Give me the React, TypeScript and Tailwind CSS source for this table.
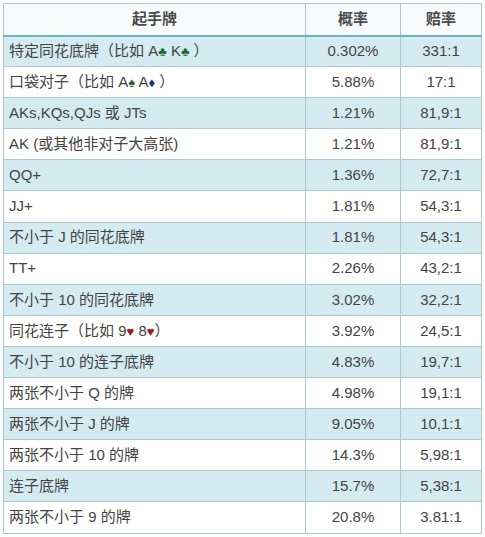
const font = { fontFamily: '"Liberation Sans", "Noto Sans CJK SC", sans-serif' };

const Club = () => <span className="text-[#1f6b2c] text-[13px]">♣</span>;
const Spade = () => <span className="text-[#2c5a3a] text-[13px]">♠</span>;
const Diamond = () => <span className="text-[#1d2f7a] text-[13px]">♦</span>;
const Heart = () => <span className="text-[#a3161d] text-[13px]">♥</span>;

type Row = { hand: React.ReactNode; prob: string; odds: string };

const rows: Row[] = [
  {
    hand: (
      <>
        特定同花底牌（比如 A<Club /> K<Club /> ）
      </>
    ),
    prob: "0.302%",
    odds: "331:1",
  },
  {
    hand: (
      <>
        口袋对子（比如 A<Spade /> A<Diamond /> ）
      </>
    ),
    prob: "5.88%",
    odds: "17:1",
  },
  { hand: "AKs,KQs,QJs 或  JTs", prob: "1.21%", odds: "81,9:1" },
  { hand: "AK (或其他非对子大高张)", prob: "1.21%", odds: "81,9:1" },
  { hand: "QQ+", prob: "1.36%", odds: "72,7:1" },
  { hand: "JJ+", prob: "1.81%", odds: "54,3:1" },
  { hand: "不小于 J 的同花底牌", prob: "1.81%", odds: "54,3:1" },
  { hand: "TT+", prob: "2.26%", odds: "43,2:1" },
  { hand: "不小于 10 的同花底牌", prob: "3.02%", odds: "32,2:1" },
  {
    hand: (
      <>
        同花连子（比如 9<Heart /> 8<Heart />）
      </>
    ),
    prob: "3.92%",
    odds: "24,5:1",
  },
  { hand: "不小于 10 的连子底牌", prob: "4.83%", odds: "19,7:1" },
  { hand: "两张不小于 Q 的牌", prob: "4.98%", odds: "19,1:1" },
  { hand: "两张不小于 J 的牌", prob: "9.05%", odds: "10,1:1" },
  { hand: "两张不小于 10 的牌", prob: "14.3%", odds: "5,98:1" },
  { hand: "连子底牌", prob: "15.7%", odds: "5,38:1" },
  { hand: "两张不小于 9 的牌", prob: "20.8%", odds: "3.81:1" },
];

export default function App() {
  return (
    <div className="w-[485px] h-[537px] bg-white pt-[3px] pl-[3px]" style={font}>
      <table className="w-[478px] border-collapse table-fixed text-[15px] text-[#444]">
        <colgroup>
          <col className="w-[302px]" />
          <col className="w-[95px]" />
          <col className="w-[81px]" />
        </colgroup>
        <thead>
          <tr className="h-[32px] bg-[#f7fbfc]">
            <th className="border border-[#aac9d3] border-b-2 border-b-[#6fb3c9] font-bold text-center text-[#4a4a4a]">起手牌</th>
            <th className="border border-[#aac9d3] border-b-2 border-b-[#6fb3c9] font-bold text-center text-[#4a4a4a]">概率</th>
            <th className="border border-[#aac9d3] border-b-2 border-b-[#6fb3c9] font-bold text-center text-[#4a4a4a]">赔率</th>
          </tr>
        </thead>
        <tbody>
          {rows.map((r, i) => (
            <tr key={i} className={`h-[31.1px] ${i % 2 === 0 ? "bg-[#d5ebf2]" : "bg-white"}`}>
              <td className="border border-[#aac9d3] pl-[5px] whitespace-nowrap">{r.hand}</td>
              <td className="border border-[#aac9d3] text-center">{r.prob}</td>
              <td className="border border-[#aac9d3] text-center">{r.odds}</td>
            </tr>
          ))}
        </tbody>
      </table>
    </div>
  );
}
